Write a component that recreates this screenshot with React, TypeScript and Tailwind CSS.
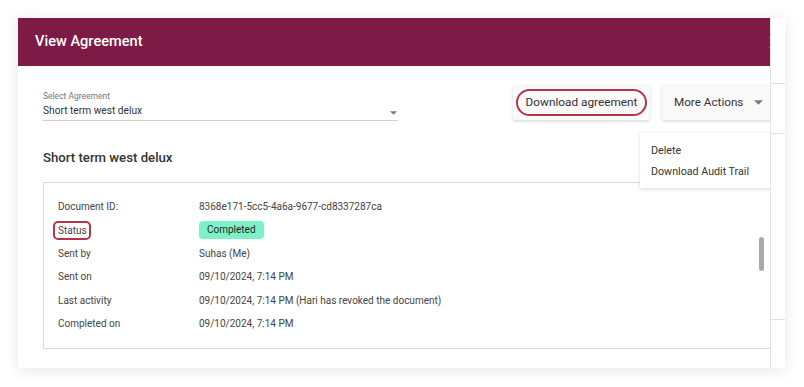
import React from 'react';

const ROWS: { label: string; value: React.ReactNode; outlined?: boolean }[] = [
  { label: 'Document ID:', value: '8368e171-5cc5-4a6a-9677-cd8337287ca' },
  {
    label: 'Status',
    outlined: true,
    value: (
      <span className="inline-flex items-center h-[18px] px-[8px] rounded-[4px] bg-[#7df2c6] text-[#1f1f1f] leading-none align-middle">
        Completed
      </span>
    ),
  },
  { label: 'Sent by', value: 'Suhas (Me)' },
  { label: 'Sent on', value: '09/10/2024, 7:14 PM' },
  { label: 'Last activity', value: '09/10/2024, 7:14 PM (Hari has revoked the document)' },
  { label: 'Completed on', value: '09/10/2024, 7:14 PM' },
];

function Caret({ className }: { className?: string }) {
  return (
    <svg viewBox="0 0 10 5" className={className}>
      <polygon points="0,0 10,0 5,5" fill="#7a7a7a" />
    </svg>
  );
}

export default function App() {
  return (
    <div className="min-h-screen bg-white p-[18px] font-['Roboto',sans-serif] text-[#3a3a3a]">
      <div className="flex w-[767px] h-[350px] bg-white shadow-[0_2px_14px_rgba(0,0,0,0.10)]">
        {/* Main panel */}
        <div className="relative w-[753px] border-r border-[#e2e2e2] overflow-hidden flex flex-col">
          {/* Header */}
          <div className="h-[48px] shrink-0 bg-[#7d1a45] flex items-center pl-[17px]">
            <h1 className="text-white text-[14.6px] font-medium">View Agreement</h1>
            <svg viewBox="0 0 14 14" className="ml-auto -mr-[12px] w-[13px] h-[13px]">
              <path d="M1 1 L13 13 M13 1 L1 13" stroke="white" strokeWidth="1.6" />
            </svg>
          </div>

          {/* Body */}
          <div className="relative flex-1 pl-[25px]">
            <div className="flex items-start mt-[19px]">
              <div className="w-[355px] shrink-0 mt-[6px] border-b border-[#cfcfcf] pb-[2px]">
                <p className="text-[8.5px] leading-[11px] text-[#777]">Select Agreement</p>
                <div className="flex items-center mt-[2px]">
                  <p className="text-[10.2px] leading-[14px] text-[#333]">Short term west delux</p>
                  <Caret className="ml-auto mr-[1px] mt-[3px] w-[7px] h-[4px]" />
                </div>
              </div>

              <button className="ml-[115px] shrink-0 w-[137px] h-[35px] bg-[#fafafa] shadow-[0_1px_3px_rgba(0,0,0,0.18)] rounded-[2px] px-[3px] py-[4px]">
                <span className="flex items-center justify-center w-full h-full rounded-full border-2 border-[#b2354b] text-[11.8px] text-[#333]">
                  Download agreement
                </span>
              </button>

              <button className="ml-[12px] shrink-0 w-[124px] h-[35px] bg-[#fafafa] shadow-[0_1px_3px_rgba(0,0,0,0.18)] rounded-[2px] flex items-center pl-[12px] text-[11.7px] text-[#333]">
                More Actions
                <Caret className="ml-[11px] w-[9px] h-[5px]" />
              </button>
            </div>

            <h2 className="mt-[27px] text-[13.2px] leading-[20px] font-medium text-[#333]">Short term west delux</h2>

            <div className="mt-[14px] w-[760px] border border-[#dadada] pt-[12px] pb-[13px] pl-[14px] text-[10px] text-[#444]">
              {ROWS.map(r => (
                <div key={r.label} className="flex items-center h-[23.4px]">
                  <div className="w-[141px] shrink-0">
                    {r.outlined ? (
                      <span className="relative">
                        {r.label}
                        <span className="absolute -left-[5px] -right-[4px] -top-[4px] -bottom-[4px] border-2 border-[#b2354b] rounded-[5px]" />
                      </span>
                    ) : (
                      r.label
                    )}
                  </div>
                  <div>{r.value}</div>
                </div>
              ))}
            </div>

            {/* More Actions menu */}
            <div className="absolute left-[622px] top-[67px] w-[140px] h-[55px] bg-white shadow-[0_1px_4px_rgba(0,0,0,0.16)] pl-[11px] text-[10.7px] text-[#333]">
              <p className="leading-[21px] mt-[7px]">Delete</p>
              <p className="leading-[21px]">Download Audit Trail</p>
            </div>

            {/* Scrollbar thumb */}
            <div className="absolute left-[741px] top-[171px] w-[5px] h-[34px] rounded-full bg-[#a9a9a9]" />
          </div>
        </div>

        {/* Side strip */}
        <div className="flex-1 flex flex-col">
          <div className="h-[66px] border-b border-[#e2e2e2]" />
          <div className="h-[50px] border-b border-[#e2e2e2]" />
          <div className="h-[186px] border-b border-[#e2e2e2]" />
          <div className="flex-1" />
        </div>
      </div>
    </div>
  );
}
